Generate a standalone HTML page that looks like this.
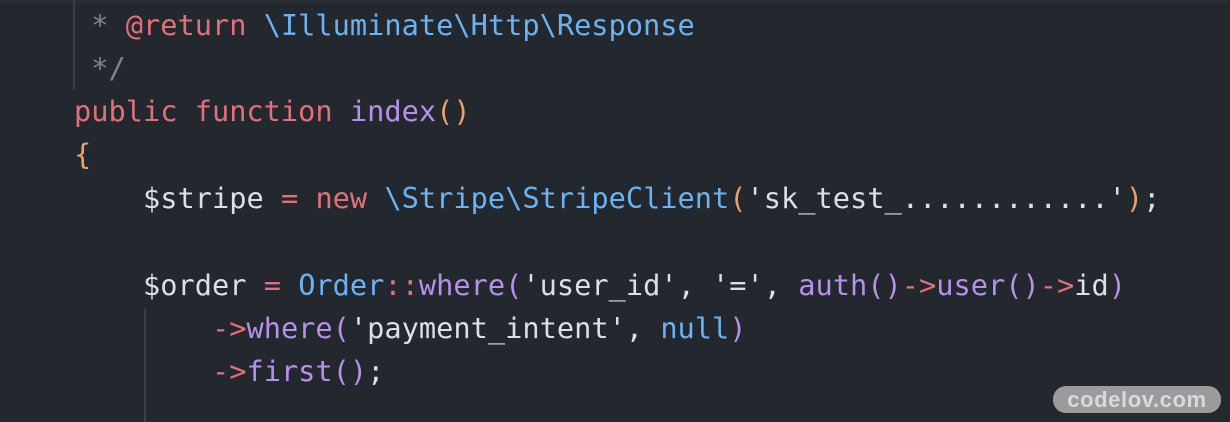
<!DOCTYPE html>
<html><head><style>
html,body{margin:0;padding:0;}
body{width:1230px;height:422px;background:#23272e;position:relative;overflow:hidden;font-family:"DejaVu Sans Mono","Liberation Mono",monospace;font-size:28.65px;}
.top{position:absolute;left:0;top:0;width:1230px;height:4px;background:#282c33;}
.l{position:absolute;left:74px;white-space:pre;color:#dcdfe4;line-height:43px;}
.c{color:#7f848e}.r{color:#e36f7a}.b{color:#6cb2f2}.p{color:#b690ea}.o{color:#e5a26b}.w{color:#dcdfe4}
.g{position:absolute;width:2px;background:#3b4048;}
.badge{position:absolute;left:1053px;top:386px;width:168px;height:27px;border-radius:13px;background:#9a9b9d;color:#dadada;font-family:"Liberation Sans",sans-serif;font-weight:bold;font-size:22px;line-height:27px;text-align:center;letter-spacing:0.6px;}
</style></head><body>
<div class="top"></div>
<div class="g" style="left:73px;top:0;height:90px"></div>
<div class="g" style="left:144px;top:308px;height:114px"></div>
<div class="l" style="top:4px"><span class="c"> * </span><span class="r">@return</span> <span class="b">\Illuminate\Http\Response</span></div>
<div class="l" style="top:47px"><span class="c"> */</span></div>
<div class="l" style="top:90px"><span class="r">public function</span> <span class="p">index</span><span class="o">()</span></div>
<div class="l" style="top:133px"><span class="o">{</span></div>
<div class="l" style="top:177px">    <span class="w">$stripe</span> <span class="r">=</span> <span class="r">new</span> <span class="b">\Stripe\StripeClient</span><span class="o">(</span>'sk_test_............'<span class="o">)</span>;</div>
<div class="l" style="top:264px">    $order <span class="r">=</span> <span class="b">Order</span><span class="r">::</span><span class="p">where</span><span class="p">(</span>'user_id', '=', <span class="p">auth</span><span class="p">()</span><span class="r">-&gt;</span><span class="p">user</span><span class="p">()</span><span class="r">-&gt;</span>id<span class="p">)</span></div>
<div class="l" style="top:307px">        <span class="r">-&gt;</span><span class="p">where</span><span class="p">(</span>'payment_intent', <span class="b">null</span><span class="p">)</span></div>
<div class="l" style="top:350px">        <span class="r">-&gt;</span><span class="p">first</span><span class="p">()</span>;</div>
<div class="badge">codelov.com</div>
</body></html>
